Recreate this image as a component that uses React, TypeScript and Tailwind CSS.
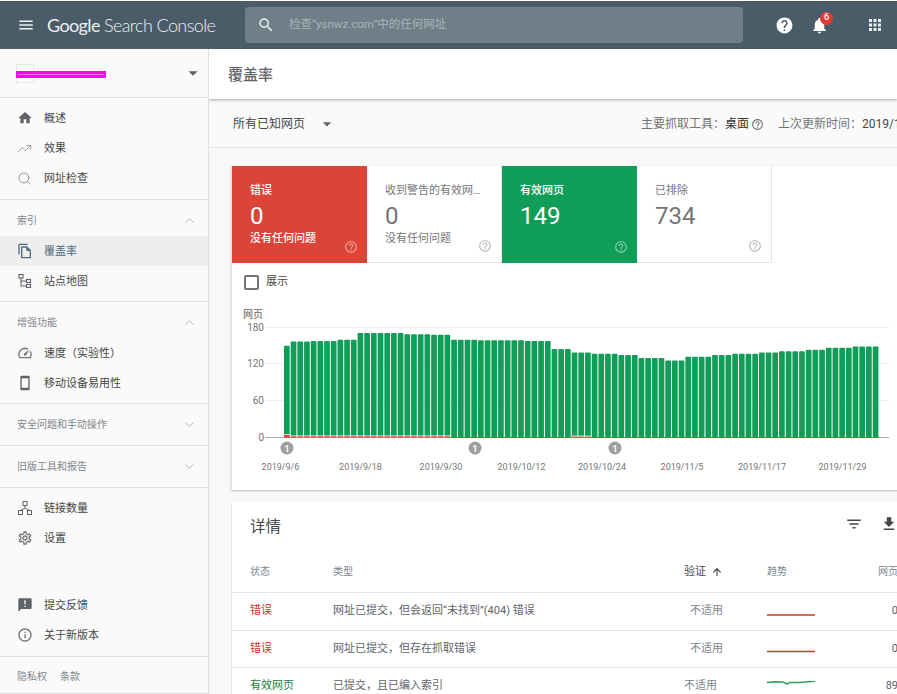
import { ChevronDown, ChevronUp, Search, TrendingUp } from "lucide-react";
import {
  MdAnnouncement,
  MdApps,
  MdArrowDropDown,
  MdArrowUpward,
  MdFileDownload,
  MdFilterList,
  MdHelp,
  MdHelpOutline,
  MdHome,
  MdInfoOutline,
  MdMenu,
  MdNotifications,
  MdOutlineFileCopy,
  MdOutlineSettings,
  MdOutlineSmartphone,
  MdOutlineSpeed,
  MdSearch,
} from "react-icons/md";

const runs: [number, number][] = [
  [150, 1], [157, 3], [158, 4], [160, 3], [171, 7], [169, 4], [168, 3],
  [160, 4], [159, 7], [158, 4], [145, 3], [139, 3], [137, 4], [135, 3],
  [130, 4], [126, 3], [132, 4], [135, 3], [137, 4], [139, 3], [141, 4],
  [143.5, 3], [147, 4], [149, 4],
];
const bars = runs.flatMap(([v, n]) => Array<number>(n).fill(v));

const dates: [string, number][] = [
  ["2019/9/6", 280.5], ["2019/9/18", 360.5], ["2019/9/30", 441], ["2019/10/12", 521.5],
  ["2019/10/24", 602], ["2019/11/5", 682], ["2019/11/17", 762], ["2019/11/29", 842.5],
];

function SitemapIcon() {
  return (
    <svg width="16" height="16" viewBox="0 0 16 16" fill="none" stroke="#5f6368" strokeWidth="1.1">
      <rect x="2" y="1.5" width="4" height="3.5" />
      <rect x="9.5" y="6.5" width="4" height="3" />
      <rect x="9.5" y="11.5" width="4" height="3" />
      <path d="M4 5v8h5.5M4 8h5.5" />
    </svg>
  );
}

function LinksIcon() {
  return (
    <svg width="16" height="16" viewBox="0 0 16 16" fill="none" stroke="#5f6368" strokeWidth="1">
      <rect x="6" y="1.5" width="4" height="4" />
      <rect x="1.5" y="10.5" width="4" height="4" />
      <rect x="10.5" y="10.5" width="4" height="4" />
      <path d="M8 5.5v2.5M3.5 10.5L8 8l4.5 2.5" />
    </svg>
  );
}

function NavItem({ icon, label, active }: { icon: React.ReactNode; label: string; active?: boolean }) {
  return (
    <div className={"flex h-[30px] items-center pl-[17px] text-[11px] " + (active ? "bg-[#eeeeee] text-[#4f6b7c]" : "text-[#444746]")}>
      <span className="flex w-[27px] shrink-0 items-center">{icon}</span>
      <span className="pt-[2px]">{label}</span>
    </div>
  );
}

function SectionHead({ label, open }: { label: string; open: boolean }) {
  return (
    <div className="flex h-[36px] items-center justify-between pl-[17px] pr-[11px] pt-[5px] text-[10px] text-[#80868b]">
      {label}
      {open ? <ChevronUp size={15} strokeWidth={1} color="#8a8a8a" /> : <ChevronDown size={15} strokeWidth={1} color="#8a8a8a" />}
    </div>
  );
}

function CollapsedSection({ label }: { label: string }) {
  return (
    <div className="flex h-[42px] items-center justify-between border-b border-[#e0e0e0] pl-[17px] pr-[11px] text-[10px] text-[#80868b]">
      {label}
      <ChevronDown size={15} strokeWidth={1} color="#8a8a8a" />
    </div>
  );
}

function Sidebar() {
  const ic = "#5f6368";
  return (
    <aside className="flex w-[209px] shrink-0 flex-col border-r border-[#e0e0e0] bg-[#fafafa]">
      <div className="flex h-[49px] shrink-0 items-center justify-between border-b border-[#e0e0e0] pl-[16px] pr-[4px]">
        <div className="relative h-[19px] w-[90px]">
          <div className="h-[19px] w-[18px] border border-[#e8e8e8] bg-white" />
          <div className="absolute left-0 top-[7px] flex h-[7px] w-[90px] items-center bg-[#ff00ff] px-[2px]">
            <div className="h-px w-full bg-[#f070f0]" />
          </div>
        </div>
        <MdArrowDropDown size={22} color="#5f6368" />
      </div>
      <div className="border-b border-[#e0e0e0] pb-[6px] pt-[5px]">
        <NavItem icon={<MdHome size={16} color={ic} />} label="概述" />
        <NavItem icon={<TrendingUp size={15} strokeWidth={1.1} color="#757575" />} label="效果" />
        <NavItem icon={<Search size={15} strokeWidth={1.2} color="#757575" />} label="网址检查" />
      </div>
      <div className="border-b border-[#e0e0e0] pb-[5px]">
        <SectionHead label="索引" open />
        <NavItem active icon={<MdOutlineFileCopy size={16} color="#4f6b7c" />} label="覆盖率" />
        <NavItem icon={<SitemapIcon />} label="站点地图" />
      </div>
      <div className="border-b border-[#e0e0e0] pb-[5px]">
        <SectionHead label="增强功能" open />
        <NavItem icon={<MdOutlineSpeed size={16} color="#757575" />} label="速度（实验性）" />
        <NavItem icon={<MdOutlineSmartphone size={16} color={ic} />} label="移动设备易用性" />
      </div>
      <CollapsedSection label="安全问题和手动操作" />
      <CollapsedSection label="旧版工具和报告" />
      <div className="pt-[5px]">
        <NavItem icon={<LinksIcon />} label="链接数量" />
        <NavItem icon={<MdOutlineSettings size={16} color="#757575" />} label="设置" />
      </div>
      <div className="flex-1" />
      <div className="border-b border-[#e0e0e0] pb-[6px]">
        <NavItem icon={<MdAnnouncement size={16} color={ic} />} label="提交反馈" />
        <NavItem icon={<MdInfoOutline size={16} color="#757575" />} label="关于新版本" />
      </div>
      <div className="flex h-[37px] shrink-0 items-center gap-[13px] border-b border-[#e0e0e0] pl-[17px] pt-[2px] text-[10px] text-[#80868b]">
        <span>隐私权</span>
        <span>条款</span>
      </div>
    </aside>
  );
}

function Tab({ title, value, note, tone }: { title: string; value: string; note?: string; tone: "red" | "green" | "plain" }) {
  const bg = tone === "red" ? "bg-[#db4437] text-white" : tone === "green" ? "bg-[#0f9d58] text-white" : "bg-white text-[#757575]";
  const border = tone === "plain" ? "border-r border-b border-[#e6e6e6]" : "";
  return (
    <div className={"relative h-[97px] w-[135px] shrink-0 pl-[18px] pt-[17px] " + bg + " " + border}>
      <div className={"h-[15px] truncate pr-[18px] text-[11px] leading-[15px] " + (tone === "plain" ? "" : "font-medium")}>{title}</div>
      <div className="mt-[4px] h-[28px] text-[24px] font-normal leading-[28px]">{value}</div>
      {note && <div className={"mt-[1px] text-[11px] leading-[15px] " + (tone === "red" ? "font-medium" : "")}>{note}</div>}
      <MdHelpOutline size={14} className="absolute bottom-[9px] right-[9px] opacity-50" />
    </div>
  );
}

function Chart() {
  return (
    <svg width="665" height="180" viewBox="232 300 665 180" className="block">
      <text x="243" y="318" fontSize="10" fill="#5f6368">网页</text>
      {[[180, 327.5], [120, 363.5], [60, 400.5]].map(([v, y]) => (
        <g key={v}>
          <line x1="266" x2="889" y1={y} y2={y} stroke="#eeeeee" />
          <text x="264" y={y + 3.5} fontSize="10" fill="#757575" textAnchor="end">{v}</text>
        </g>
      ))}
      <text x="264" y="440.5" fontSize="10" fill="#757575" textAnchor="end">0</text>
      <line x1="265" x2="889" y1="437.5" y2="437.5" stroke="#b0b0b0" />
      {bars.map((v, i) => {
        const x = 284 + i * 6.69;
        const top = 437.5 - v * 0.611;
        const early = i < 25;
        const bottom = i === 0 ? 434.3 : early ? 435.6 : 437;
        return (
          <g key={i}>
            <path
              d={`M${x} ${bottom}V${top + 1}q0 -1 1 -1H${x + 4.7}q1 0 1 1V${bottom}Z`}
              fill="#0f9d58"
            />
            {early && <rect x={x} y={i === 0 ? 435 : 436.3} width="5.7" height={i === 0 ? 2.7 : 1.4} fill="#e53935" />}
            {!early && <rect x={x - 0.5} y="437" width="6.7" height="1" fill="#db4437" />}
            {i >= 43 && i <= 45 && <rect x={x} y="435.4" width="5.7" height="1.8" fill="#f4a79f" />}
          </g>
        );
      })}
      {[287, 475, 615].map((cx) => (
        <g key={cx}>
          <circle cx={cx} cy="448" r="6.5" fill="#9e9e9e" />
          <text x={cx} y="451.5" fontSize="9.5" fontWeight="700" fill="#fff" textAnchor="middle">1</text>
        </g>
      ))}
      {dates.map(([d, x]) => (
        <text key={d} x={x} y="470" fontSize="9" fill="#757575" textAnchor="middle">{d}</text>
      ))}
    </svg>
  );
}

function Row({ status, color, type, trend, pages, verify, h }: { status: string; color: string; type: string; trend: React.ReactNode; pages: string; verify: string; h: string }) {
  return (
    <div className={"flex shrink-0 items-center border-b border-[#e6e6e6] pl-[18px] text-[11px] " + h}>
      <div className={"w-[83px] shrink-0 " + color}>{status}</div>
      <div className="w-[300px] shrink-0 text-[#5f6368]">{type}</div>
      <div className={"shrink-0 text-right text-[#80868b] " + verify}>不适用</div>
      <div className="ml-[44px] w-[48px] shrink-0">{trend}</div>
      <div className="flex-1 text-right text-[#5f6368]">{pages}</div>
    </div>
  );
}

function Spark({ color, d, className }: { color: string; d: string; className?: string }) {
  return (
    <svg width="48" height="8" viewBox="0 0 48 8" fill="none" stroke={color} strokeWidth="1.4" className={"block " + (className ?? "")}>
      <path d={d} />
    </svg>
  );
}

export default function App() {
  return (
    <div className="flex h-[694px] w-[897px] flex-col overflow-hidden bg-white pt-px font-['Roboto','Noto_Sans_CJK_SC',sans-serif]">
      <header className="flex h-[48px] shrink-0 items-center bg-[#4a5c68] text-white">
        <MdMenu size={18} className="ml-[17px]" color="#eceff1" />
        <div className="ml-[12px] w-[198px] shrink-0 whitespace-nowrap text-[18px] leading-none tracking-[-0.6px] text-[#eceff1] font-['Lato',sans-serif]">
          <span>Google</span> <span className="font-light">Search Console</span>
        </div>
        <div className="flex h-[36px] w-[498px] shrink-0 items-center rounded bg-[#6e7f87]">
          <MdSearch size={18} className="ml-[12px]" color="#eceff1" />
          <span className="ml-[14px] text-[11.5px] text-[#a9b4b9]">检查“ysnwz.com”中的任何网址</span>
        </div>
        <MdHelp size={19} className="ml-[32px]" color="#fff" />
        <div className="relative ml-[16px]">
          <MdNotifications size={19} color="#fff" />
          <span className="absolute right-[-4px] top-[-4px] flex h-[13px] w-[13px] items-center justify-center rounded-full bg-[#e53935] text-[9px] font-medium text-white">6</span>
        </div>
        <MdApps size={18} className="ml-[37px]" color="#eceff1" />
      </header>
      <div className="flex min-h-0 flex-1">
        <Sidebar />
        <main className="flex min-w-0 flex-1 flex-col overflow-hidden bg-[#f8f8f8]">
          <div className="relative z-10 flex h-[50px] shrink-0 items-center bg-white pl-[19px] pt-[2px] text-[15px] font-medium text-[#5f6368] shadow-[0_1px_3px_rgba(0,0,0,0.35)]">
            覆盖率
          </div>
          <div className="flex h-[49px] shrink-0 items-center whitespace-nowrap border-b border-[#e6e6e6] bg-[#fafafa] pl-[24px] pt-[2px] text-[12px] text-[#757575]">
            <span className="w-[72px] shrink-0 text-[#444746]">所有已知网页</span>
            <MdArrowDropDown size={20} className="ml-[12px] shrink-0" color="#5f6368" />
            <span className="ml-[304px] shrink-0">主要抓取工具：</span>
            <span className="shrink-0 text-[#333]">桌面</span>
            <MdHelpOutline size={13} className="ml-[2px] shrink-0" color="#757575" />
            <span className="ml-[14px] shrink-0">上次更新时间：<span className="text-[#444746]">2019/12/5</span></span>
          </div>
          <div className="flex flex-col pl-[22px] pt-[18px]">
            <section className="h-[324px] w-[700px] shrink-0 border-l border-[#e6e6e6] bg-white shadow-[0_1px_2px_rgba(0,0,0,0.25)]">
              <div className="flex h-[97px]">
                <Tab tone="red" title="错误" value="0" note="没有任何问题" />
                <Tab tone="plain" title="收到警告的有效网页" value="0" note="没有任何问题" />
                <Tab tone="green" title="有效网页" value="149" />
                <Tab tone="plain" title="已排除" value="734" />
              </div>
              <div className="flex h-[37px] items-center pl-[12px] pt-[2px] text-[11px] text-[#444746]">
                <span className="mr-[7px] h-[15px] w-[15px] rounded-[2px] border-2 border-[#757575]" />
                展示
              </div>
              <Chart />
            </section>
            <section className="mt-[13px] w-[700px] shrink-0 border-l border-[#e6e6e6] bg-white">
              <div className="flex h-[42px] items-center justify-between pl-[18px] pr-[33px] pt-[7px]">
                <span className="text-[15.5px] text-[#444746]">详情</span>
                <div className="mb-[8px] flex items-center gap-[17px]">
                  <MdFilterList size={18} color="#444746" />
                  <MdFileDownload size={18} color="#444746" />
                </div>
              </div>
              <div className="flex h-[48px] items-center border-b border-[#e6e6e6] pl-[18px] pt-[5px] text-[10px] text-[#80868b]">
                <div className="w-[83px] shrink-0">状态</div>
                <div className="w-[351px] shrink-0">类型</div>
                <div className="flex w-[83px] shrink-0 items-center gap-[5px] pt-[2px] text-[11px] text-[#444746]">
                  验证 <MdArrowUpward size={12} color="#333" />
                </div>
                <div className="w-[111px] shrink-0">趋势</div>
                <div>网页</div>
              </div>
              <div className="w-[666px]">
                <Row h="h-[38px]" status="错误" color="text-[#d93025]" type="网址已提交，但会返回“未找到”(404) 错误" verify="w-[90px]" pages="0" trend={<Spark color="#d93025" d="M0 7h48" />} />
                <Row h="h-[37px]" status="错误" color="text-[#d93025]" type="网址已提交，但存在抓取错误" verify="w-[90px]" pages="0" trend={<Spark color="#d93025" d="M0 6.5h48" />} />
                <Row h="h-[38px]" status="有效网页" color="text-[#188038]" type="已提交，且已编入索引" verify="w-[84px] mr-[6px]" pages="89" trend={<Spark className="mb-[4px]" color="#2e9e5b" d="M0 1.5L8 .8L16 1L20 3L23 1.5L33 1.5L40 .8L48 .4" />} />
              </div>
            </section>
          </div>
        </main>
      </div>
    </div>
  );
}
